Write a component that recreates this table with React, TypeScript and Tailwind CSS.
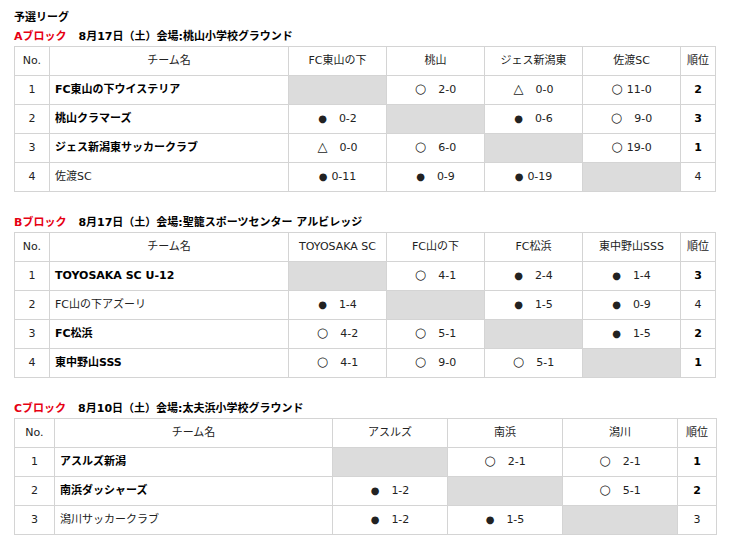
type Result = { mark: "win" | "lose" | "draw"; score: string } | null;

type TeamRow = {
  name: string;
  results: Result[];
  rank: number;
  bold: boolean;
};

type Block = {
  label: string;
  info: string;
  columns: string[];
  teams: TeamRow[];
  widths: { no: string; team: string; opp: string; rank: string };
};

const W = (score: string): Result => ({ mark: "win", score });
const L = (score: string): Result => ({ mark: "lose", score });
const D = (score: string): Result => ({ mark: "draw", score });

const blocks: Block[] = [
  {
    label: "Aブロック",
    info: "8月17日（土）会場:桃山小学校グラウンド",
    columns: ["FC東山の下", "桃山", "ジェス新潟東", "佐渡SC"],
    widths: { no: "w-[35px]", team: "w-[239px]", opp: "w-[98px]", rank: "w-[35px]" },
    teams: [
      { name: "FC東山の下ウイステリア", results: [null, W("2-0"), D("0-0"), W("11-0")], rank: 2, bold: true },
      { name: "桃山クラマーズ", results: [L("0-2"), null, L("0-6"), W("9-0")], rank: 3, bold: true },
      { name: "ジェス新潟東サッカークラブ", results: [D("0-0"), W("6-0"), null, W("19-0")], rank: 1, bold: true },
      { name: "佐渡SC", results: [L("0-11"), L("0-9"), L("0-19"), null], rank: 4, bold: false },
    ],
  },
  {
    label: "Bブロック",
    info: "8月17日（土）会場:聖籠スポーツセンター アルビレッジ",
    columns: ["TOYOSAKA SC", "FC山の下", "FC松浜", "東中野山SSS"],
    widths: { no: "w-[35px]", team: "w-[239px]", opp: "w-[98px]", rank: "w-[35px]" },
    teams: [
      { name: "TOYOSAKA SC U-12", results: [null, W("4-1"), L("2-4"), L("1-4")], rank: 3, bold: true },
      { name: "FC山の下アズーリ", results: [L("1-4"), null, L("1-5"), L("0-9")], rank: 4, bold: false },
      { name: "FC松浜", results: [W("4-2"), W("5-1"), null, L("1-5")], rank: 2, bold: true },
      { name: "東中野山SSS", results: [W("4-1"), W("9-0"), W("5-1"), null], rank: 1, bold: true },
    ],
  },
  {
    label: "Cブロック",
    info: "8月10日（土）会場:太夫浜小学校グラウンド",
    columns: ["アスルズ", "南浜", "潟川"],
    widths: { no: "w-[40px]", team: "w-[278px]", opp: "w-[115px]", rank: "w-[39px]" },
    teams: [
      { name: "アスルズ新潟", results: [null, W("2-1"), W("2-1")], rank: 1, bold: true },
      { name: "南浜ダッシャーズ", results: [L("1-2"), null, W("5-1")], rank: 2, bold: true },
      { name: "潟川サッカークラブ", results: [L("1-2"), L("1-5"), null], rank: 3, bold: false },
    ],
  },
];

function Mark({ mark }: { mark: "win" | "lose" | "draw" }) {
  if (mark === "win") return <span className="text-[13px] leading-none">○</span>;
  if (mark === "lose") return <span className="text-[10px] leading-none">●</span>;
  return <span className="text-[13px] leading-none">△</span>;
}

function ResultCell({ result }: { result: Result }) {
  if (!result) return <td className="border border-[#d4d4d4] bg-[#dcdcdc]" />;
  const wide = result.score.length > 3;
  return (
    <td className="border border-[#d4d4d4] text-center">
      <Mark mark={result.mark} />
      <span className={wide ? "ml-[4px]" : "ml-[12px]"}>{result.score}</span>
    </td>
  );
}

function LeagueTable({ block }: { block: Block }) {
  return (
    <table className="w-full table-fixed border-collapse">
      <colgroup>
        <col className={block.widths.no} />
        <col className={block.widths.team} />
        {block.columns.map((c) => (
          <col key={c} className={block.widths.opp} />
        ))}
        <col className={block.widths.rank} />
      </colgroup>
      <thead>
        <tr className="h-[29px]">
          <th className="border border-[#d4d4d4] font-normal">No.</th>
          <th className="border border-[#d4d4d4] font-normal">チーム名</th>
          {block.columns.map((c) => (
            <th key={c} className="border border-[#d4d4d4] font-normal">
              {c}
            </th>
          ))}
          <th className="border border-[#d4d4d4] font-normal">順位</th>
        </tr>
      </thead>
      <tbody>
        {block.teams.map((t, i) => (
          <tr key={t.name} className="h-[29px]">
            <td className="border border-[#d4d4d4] text-center">{i + 1}</td>
            <td className={`border border-[#d4d4d4] pl-[5px] ${t.bold ? "font-bold text-black" : ""}`}>
              {t.name}
            </td>
            {t.results.map((r, j) => (
              <ResultCell key={j} result={r} />
            ))}
            <td className={`border border-[#d4d4d4] text-center ${t.bold ? "font-bold text-black" : ""}`}>
              {t.rank}
            </td>
          </tr>
        ))}
      </tbody>
    </table>
  );
}

export default function App() {
  return (
    <div className="min-h-screen bg-white px-[14px] pt-[8px] font-['DejaVu_Sans','Noto_Sans_CJK_JP',sans-serif] text-[11px] text-[#222]">
      <div className="h-[19px] leading-[19px] font-bold text-black">予選リーグ</div>

      {blocks.map((b, idx) => (
        <section key={b.label} className={idx > 0 ? "mt-[21px]" : ""}>
          {/* block heading */}
          <div className="h-[19px] leading-[19px] font-bold text-black">
            <span className="text-[#e60012]">{b.label}</span>
            <span className="ml-[12px]">{b.info}</span>
          </div>
          <LeagueTable block={b} />
        </section>
      ))}
    </div>
  );
}
